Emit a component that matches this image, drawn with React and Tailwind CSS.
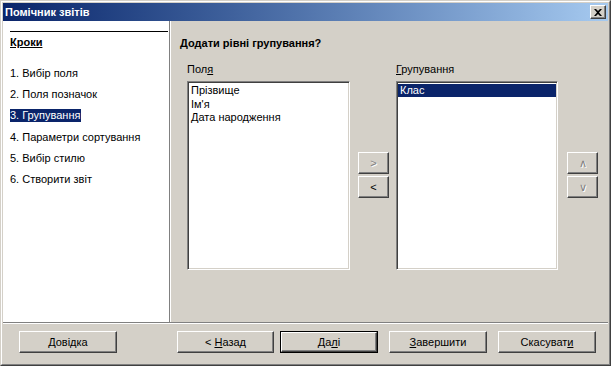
const font = { fontFamily: '"Liberation Sans", Arial, sans-serif' };

const raised =
  "bg-[#d4d0c8] border border-t-white border-l-white border-r-[#404040] border-b-[#404040] shadow-[inset_-1px_-1px_0_#808080]";
const sunken =
  "bg-white border border-t-[#808080] border-l-[#808080] border-r-white border-b-white shadow-[inset_1px_1px_0_#404040,inset_-1px_-1px_0_#d4d0c8]";
const disabledText = "text-[#808080] [text-shadow:1px_1px_0_#fff]";

const steps = ["1. Вибір поля", "2. Поля позначок", "3. Групування", "4. Параметри сортування", "5. Вибір стилю", "6. Створити звіт"];

function Btn({ children, className = "", isDefault = false }) {
  const inner = (
    <div className={`${raised} h-full w-full flex items-center justify-center text-[11px] text-black`}>{children}</div>
  );
  if (isDefault) {
    return <div className={`border border-black ${className}`}>{inner}</div>;
  }
  return <div className={className}>{inner}</div>;
}

function SmallBtn({ label, disabled }) {
  return (
    <div className={`${raised} w-[31px] h-[22px] flex items-center justify-center text-[11px] ${disabled ? disabledText : "text-black"}`}>
      {label}
    </div>
  );
}

export default function App() {
  return (
    <div
      style={font}
      className="w-[611px] h-[366px] flex flex-col border border-t-[#d4d0c8] border-l-[#d4d0c8] border-r-[#404040] border-b-[#404040] bg-[#d4d0c8]"
    >
      <div className="flex-1 flex flex-col border border-t-white border-l-white border-r-[#808080] border-b-[#808080] p-px">
        {/* title bar */}
        <div className="h-[18px] flex items-center justify-between bg-linear-to-r from-[#0a246a] to-[#a6caf0] pl-[2px] pr-[2px]">
          <span className="text-white font-bold text-[11px] leading-none">Помічник звітів</span>
          <div className={`${raised} w-[16px] h-[14px] flex items-center justify-center`}>
            <svg width="8" height="7" viewBox="0 0 8 7">
              <path d="M0 0h2l2 2 2-2h2L5 3.5 8 7H6L4 5 2 7H0l3-3.5z" fill="#000" />
            </svg>
          </div>
        </div>

        {/* content */}
        <div className="h-[301px] flex">
          <div className="w-[167px] bg-white border-r border-[#808080] pl-[7px] pr-[1px]">
            <div className="mt-[10px] h-px bg-black" />
            <div className="mt-[4px] text-[11px] leading-[13px] font-bold underline text-black">Кроки</div>
            <div className="mt-[18px] flex flex-col gap-[8.2px]">
              {steps.map((s, i) => (
                <div key={s} className="text-[11px] leading-[13px]">
                  {i === 2 ? (
                    <span className="bg-[#0a246a] text-white pr-[1px] inline-block">{s}</span>
                  ) : (
                    <span className="text-black">{s}</span>
                  )}
                </div>
              ))}
            </div>
          </div>

          <div className="flex-1 border-l border-white pl-[9px] pt-[15px]">
            <div className="text-[11px] leading-[14px] font-bold text-black">Додати рівні групування?</div>
            <div className="mt-[13px] ml-[7px] flex items-start">
              <div className="w-[163px] flex flex-col">
                <div className="text-[11px] leading-[13px] text-black">
                  Пол<span className="underline">я</span>
                </div>
                <div className={`${sunken} mt-[5px] h-[189px] pt-[2px] pl-[3px] text-[11px] leading-[13.5px] text-black`}>
                  <div>Прізвище</div>
                  <div>Ім'я</div>
                  <div>Дата народження</div>
                </div>
              </div>

              <div className="ml-[8px] mt-[89px] flex flex-col gap-[2px]">
                <SmallBtn label=">" disabled />
                <SmallBtn label="<" />
              </div>

              <div className="ml-[7px] w-[162px] flex flex-col">
                <div className="text-[11px] leading-[13px] text-black">
                  <span className="underline">Г</span>рупування
                </div>
                <div className={`${sunken} mt-[5px] h-[189px] p-[1px] pt-[2px] text-[11px] leading-[13px]`}>
                  <div className="bg-[#0a246a] text-white pl-[2px]">Клас</div>
                </div>
              </div>

              <div className="ml-[9px] mt-[89px] flex flex-col gap-[2px]">
                <SmallBtn label="∧" disabled />
                <SmallBtn label="∨" disabled />
              </div>
            </div>
          </div>
        </div>

        {/* separator */}
        <div className="border-t border-[#808080]" />
        <div className="border-t border-white" />

        {/* buttons */}
        <div className="flex-1 flex items-start pt-[7px]">
          <Btn className="ml-[16px] w-[98px] h-[22px]">
            <span className="underline">Д</span>овідка
          </Btn>
          <Btn className="ml-[60px] w-[97px] h-[22px]">
            &lt; <span className="underline ml-[3px]">Н</span>азад
          </Btn>
          <Btn isDefault className="ml-[6px] w-[98px] h-[22px]">
            Да<span className="underline">л</span>і
          </Btn>
          <Btn className="ml-[11px] w-[98px] h-[22px]">
            <span className="underline">З</span>авершити
          </Btn>
          <Btn className="ml-[11px] w-[98px] h-[22px]">
            Скасуват<span className="underline">и</span>
          </Btn>
        </div>
      </div>
    </div>
  );
}
